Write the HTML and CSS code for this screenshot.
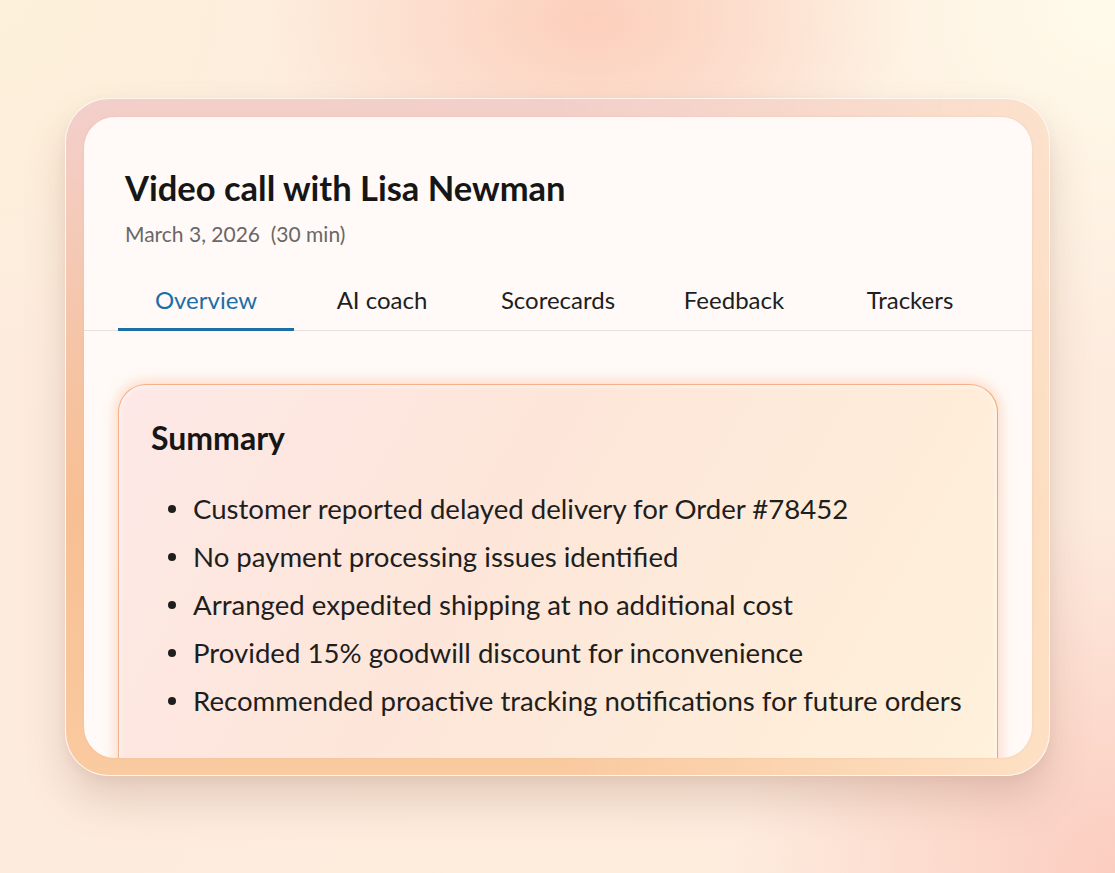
FILE: index.html
```html
<!DOCTYPE html>
<html lang="en">
<head>
<meta charset="utf-8">
<title>Video call with Lisa Newman</title>
<link rel="stylesheet" href="styles.css">
</head>
<body>
<div class="page">
  <div class="frame">
    <div class="card">
      <header class="header">
        <h1 class="title">Video call with Lisa Newman</h1>
        <p class="meta">March 3, 2026&nbsp; (30 min)</p>
      </header>
      <nav class="tabs">
        <div class="tab active">Overview</div>
        <div class="tab">AI coach</div>
        <div class="tab">Scorecards</div>
        <div class="tab">Feedback</div>
        <div class="tab">Trackers</div>
      </nav>
      <section class="summary">
        <h2 class="summary-title">Summary</h2>
        <ul class="points">
          <li>Customer reported delayed delivery for Order #78452</li>
          <li>No payment processing issues identified</li>
          <li>Arranged expedited shipping at no additional cost</li>
          <li>Provided 15% goodwill discount for inconvenience</li>
          <li>Recommended proactive tracking notifications for future orders</li>
        </ul>
      </section>
    </div>
  </div>
</div>
</body>
</html>
```
FILE: styles.css
```css
html, body {
  margin: 0;
  padding: 0;
}
body {
  width: 1115px;
  height: 873px;
  overflow: hidden;
  font-family: Lato, "Noto Sans", sans-serif;
  background-color: #fdebde;
  background-image:
    radial-gradient(ellipse 320px 200px at 590px 20px, rgba(252, 206, 186, 0.95), rgba(252, 206, 186, 0) 100%),
    radial-gradient(ellipse 420px 380px at 1115px 0px, rgba(255, 251, 234, 1), rgba(255, 251, 234, 0) 100%),
    radial-gradient(ellipse 420px 420px at 0px 0px, rgba(253, 241, 218, 1), rgba(253, 241, 218, 0) 100%),
    radial-gradient(ellipse 380px 360px at 1115px 873px, rgba(251, 205, 192, 1), rgba(251, 205, 192, 0) 100%),
    radial-gradient(ellipse 500px 260px at 520px 873px, rgba(254, 236, 220, 1), rgba(254, 236, 220, 0) 100%);
}
.page {
  width: 1115px;
  height: 873px;
  display: flex;
  align-items: center;
  justify-content: center;
}
.frame {
  box-sizing: border-box;
  width: 985px;
  height: 678px;
  padding: 18px 17px 17px 18px;
  border-radius: 44px;
  border: 1px solid rgba(255, 255, 255, 0.8);
  background-image:
    linear-gradient(to right, rgba(254, 230, 205, 0) 50%, rgba(254, 230, 205, 0.8) 100%),
    linear-gradient(to bottom, #f3cfcb 0%, #f5c5a8 35%, #f7bf93 60%, #facaa0 100%);
  box-shadow: 0 24px 40px rgba(150, 105, 85, 0.24), 0 4px 10px rgba(150, 105, 85, 0.08);
}
.card {
  box-sizing: border-box;
  height: 100%;
  border-radius: 31px;
  background: #fffaf7;
  overflow: hidden;
  box-shadow: 0 0 2px rgba(220, 170, 140, 0.45);
}
.header {
  padding: 52px 41px 0 41px;
}
.title {
  margin: 0;
  font-size: 34.5px;
  line-height: 38px;
  font-weight: 700;
  color: #161616;
}
.meta {
  margin: 15px 0 0 0;
  font-size: 21px;
  line-height: 24px;
  color: #6a6766;
}
.tabs {
  display: flex;
  margin-top: 40px;
  padding: 0 34px;
  border-bottom: 1px solid #e8e2de;
}
.tab {
  width: 176px;
  text-align: center;
  font-size: 24px;
  line-height: 28px;
  color: #1e1e1e;
  padding-bottom: 14px;
  border-bottom: 3px solid transparent;
  margin-bottom: -1px;
}
.tab.active {
  color: #1d6ea7;
  border-bottom-color: #1d6ea7;
}
.summary {
  box-sizing: border-box;
  margin: 53px 34px 0 34px;
  height: 400px;
  padding: 34px 32px 0 32px;
  border-radius: 28px;
  border: 1.5px solid #f4b08a;
  border-right-color: #f2a466;
  border-bottom-color: #f2a466;
  background: linear-gradient(120deg, #fde8e7 0%, #fde6d9 40%, #feecd9 75%, #fff1db 100%);
  box-shadow: 0 0 14px 2px rgba(247, 160, 115, 0.4), inset 0 0 6px rgba(255, 255, 255, 0.8);
}
.summary-title {
  margin: 0;
  font-size: 32px;
  line-height: 38px;
  font-weight: 700;
  color: #161616;
}
.points {
  list-style: none;
  margin: 28px 0 0 0;
  padding: 0 0 0 17px;
}
.points li {
  display: flex;
  align-items: center;
  gap: 17px;
  font-size: 27.6px;
  line-height: 48px;
  color: #1e1e1e;
}
.points li::before {
  content: "";
  flex: none;
  width: 8px;
  height: 8px;
  border-radius: 50%;
  background: #1e1e1e;
}
```
